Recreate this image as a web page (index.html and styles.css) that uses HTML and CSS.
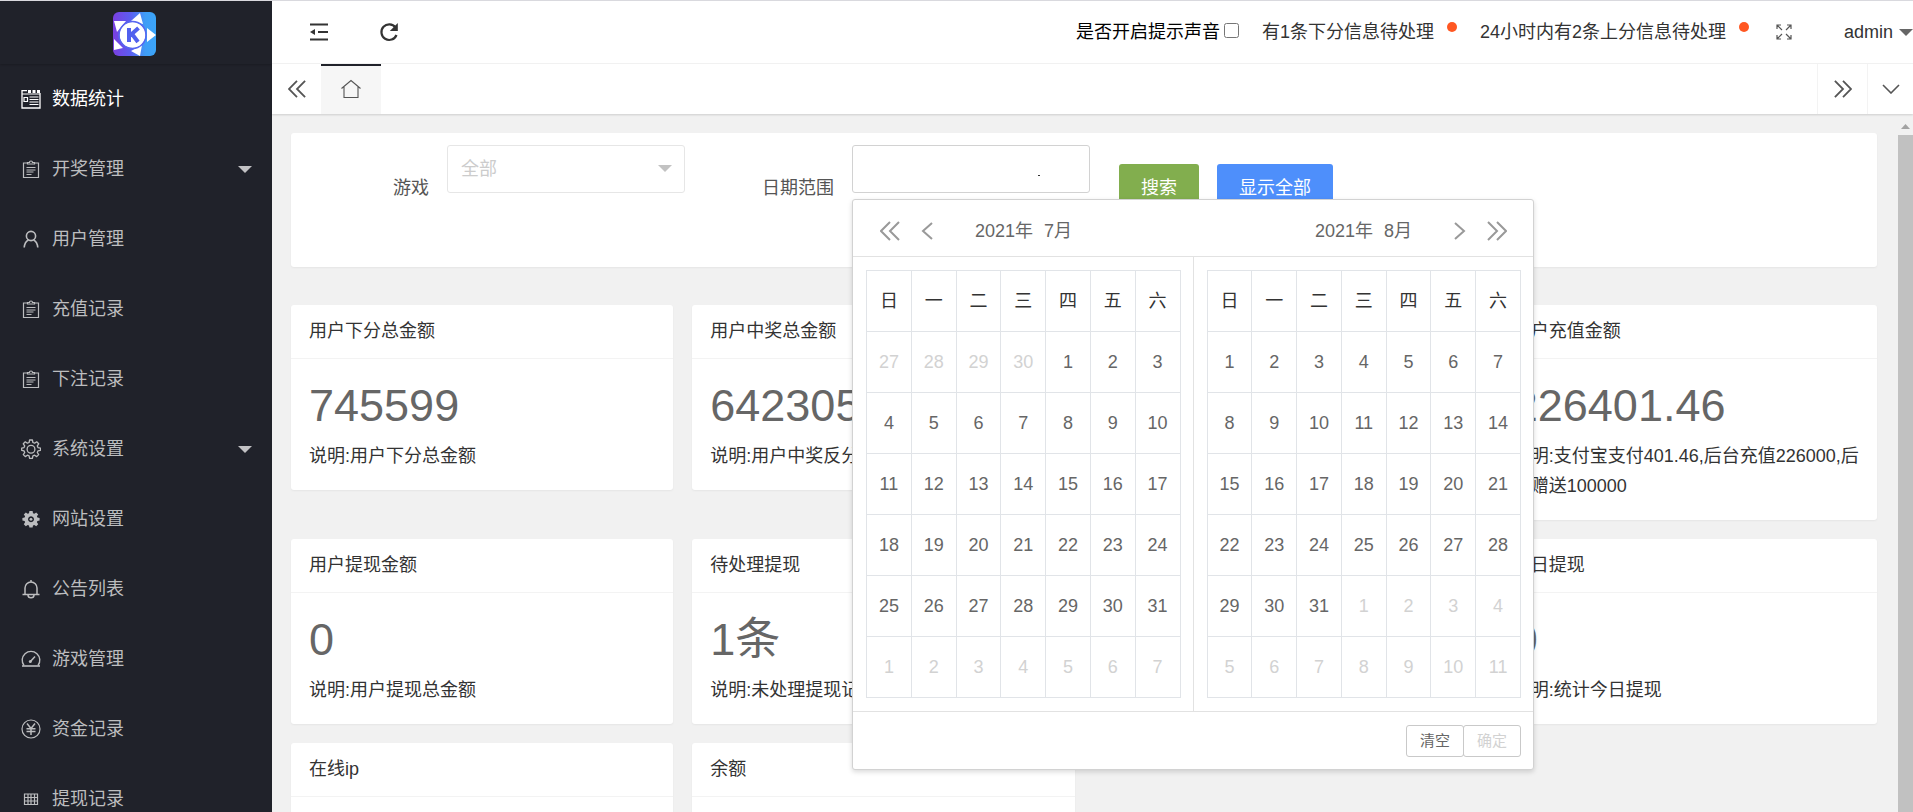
FILE: index.html
```html
<!DOCTYPE html>
<html lang="zh-CN">
<head>
<meta charset="utf-8">
<title>数据统计</title>
<link rel="stylesheet" href="styles.css">
</head>
<body>
<svg class="sprite" aria-hidden="true">
  <symbol id="i-board" viewBox="0 0 20 20"><path d="M1 1v18h18V4" fill="none" stroke="currentColor" stroke-width="1.3"/><path d="M1 1.600h5M1 5h18" stroke="currentColor" stroke-width="1.200"/><path d="M7 1h3v3H7zM11.500 1h3v3h-3zM16 1h3v3h-3z" fill="currentColor"/><path d="M3 8.500h3.500v4H3zM8.500 8h9M8.500 10.500h9M8.500 13h9M8.500 15.500h9" fill="none" stroke="currentColor" stroke-width="1.200"/></symbol>
  <symbol id="i-clip" viewBox="0 0 20 20"><path d="M7 4H2.500v14.500h15V4H13" fill="none" stroke="currentColor" stroke-width="1.200"/><path d="M6.500 5V3.500h2a1.500 1.500 0 0 1 3 0h2V5z" fill="none" stroke="currentColor" stroke-width="1.200"/><path d="M5.500 8.500h9M5.500 11h9M5.500 13h7M5.500 15.500h5" stroke="currentColor" stroke-width="1"/></symbol>
  <symbol id="i-user" viewBox="0 0 20 20"><circle cx="10" cy="7" r="4.600" fill="none" stroke="currentColor" stroke-width="1.600"/><path d="M7.500 11c-2.500 1.200-4 4-4.300 7.500M12.500 11c2.500 1.200 4 4 4.300 7.500" fill="none" stroke="currentColor" stroke-width="1.600"/></symbol>
  <symbol id="i-gear" viewBox="0 0 20 20"><path d="M8.600 1h2.800l.5 2.500 1.700.7 2.100-1.400 2 2-1.400 2.100.7 1.700 2.500.5v2.200l-2.500.5-.7 1.700 1.400 2.100-2 2-2.100-1.400-1.700.7-.5 2.500H8.600l-.5-2.500-1.700-.7-2.100 1.400-2-2 1.400-2.100-.7-1.700L.7 11.300V9.100L3 8.600l.7-1.700-1.400-2.100 2-2 2.100 1.400 1.700-.7z" fill="none" stroke="currentColor" stroke-width="1.300" stroke-linejoin="round"/><circle cx="10" cy="10.200" r="3.900" fill="none" stroke="currentColor" stroke-width="1.300"/></symbol>
  <symbol id="i-gearfill" viewBox="0 0 20 20"><path fill-rule="evenodd" d="M8.400 2h3.200l.4 2.200 1.300.5 1.900-1.300 2 2-1.300 1.900.5 1.300 2.200.4v2.600l-2.200.4-.5 1.300 1.300 1.900-2 2-1.900-1.300-1.300.5-.4 2.200H8.400L8 16.400l-1.300-.5-1.900 1.300-2-2 1.300-1.900-.5-1.300-2.200-.4V9l2.200-.4.5-1.300-1.300-1.900 2-2 1.900 1.300L8 4.200zM10 7.300a3 3 0 1 0 .01 0z" fill="currentColor"/><circle cx="10" cy="10.300" r="1.400" fill="currentColor"/></symbol>
  <symbol id="i-bell" viewBox="0 0 20 20"><path d="M4 15V9a6 6 0 0 1 12 0v6M1.500 15.500h17M10 1v2" fill="none" stroke="currentColor" stroke-width="1.500"/><path d="M7 16a3 2.800 0 0 0 6 0" fill="none" stroke="currentColor" stroke-width="1.500"/></symbol>
  <symbol id="i-dash" viewBox="0 0 20 20"><path d="M3 16.500a8.800 8.800 0 1 1 14 0" fill="none" stroke="currentColor" stroke-width="1.400"/><path d="M1 16h18v2H1z" fill="currentColor" opacity=".8"/><path d="M9 13l5-5.500" stroke="currentColor" stroke-width="1.500"/><circle cx="9.300" cy="12.600" r="1.500" fill="currentColor"/></symbol>
  <symbol id="i-yen" viewBox="0 0 20 20"><circle cx="10" cy="10" r="9" fill="none" stroke="currentColor" stroke-width="1.200"/><path d="M6 4.500l4 5 4-5M10 9.500V16M5.500 9.800h9M5.500 12.600h9" fill="none" stroke="currentColor" stroke-width="1.500"/></symbol>
  <symbol id="i-table" viewBox="0 0 20 20"><path d="M3.500 5h13v10.500h-13zM3 8.500h14M3 12h14M7 5v11M10 5v11M13.500 5v11" fill="none" stroke="currentColor" stroke-width="1.200"/></symbol>
  <symbol id="i-dl" viewBox="0 0 20 20"><path d="M10 1L1 10l9 9M19 1l-9 9 9 9" fill="none" stroke="currentColor" stroke-width="2"/></symbol>
  <symbol id="i-dr" viewBox="0 0 20 20"><path d="M1 1l9 9-9 9M10 1l9 9-9 9" fill="none" stroke="currentColor" stroke-width="2"/></symbol>
  <symbol id="i-l" viewBox="0 0 12 20"><path d="M11 2l-9 8 9 8" fill="none" stroke="currentColor" stroke-width="2"/></symbol>
  <symbol id="i-r" viewBox="0 0 12 20"><path d="M1 2l9 8-9 8" fill="none" stroke="currentColor" stroke-width="2"/></symbol>
  <symbol id="i-tri" viewBox="0 0 14 7"><path d="M0 0h14L7 7z" fill="currentColor"/></symbol>
</svg>

<div class="app">
  <aside class="side">
    <div class="logo">
      <svg width="43" height="44" viewBox="0 0 43 44" role="img" aria-label="K">
        <defs><linearGradient id="lg" x1="0" x2="1"><stop offset="0" stop-color="#7a3fe0"/><stop offset=".4" stop-color="#5c5df0"/><stop offset=".75" stop-color="#3f9df6"/><stop offset="1" stop-color="#3aa5f8"/></linearGradient></defs>
        <rect width="43" height="44" rx="6" fill="url(#lg)"/>
        <g fill="#fff"><circle cx="19.500" cy="23" r="13"/><path d="M27 1l3 11-12-3zM43 23l-9 7V16zM27 44l-9-5 11-6zM1 38V27l9 9zM1 9l12 0-9 11z"/></g>
        <circle cx="19.500" cy="23" r="13.500" fill="none" stroke="#5866f0" stroke-width="1.500"/>
        <path d="M16 16v14M25.500 16l-9 8M19 22l6 8" fill="none" stroke="#5160ee" stroke-width="4"/>
      </svg>
    </div>
    <nav class="menu">
      <a class="item on" href="#"><svg class="ic"><use href="#i-board"/></svg><span>数据统计</span></a>
      <a class="item" href="#"><svg class="ic"><use href="#i-clip"/></svg><span>开奖管理</span><svg class="tri"><use href="#i-tri"/></svg></a>
      <a class="item" href="#"><svg class="ic"><use href="#i-user"/></svg><span>用户管理</span></a>
      <a class="item" href="#"><svg class="ic"><use href="#i-clip"/></svg><span>充值记录</span></a>
      <a class="item" href="#"><svg class="ic"><use href="#i-clip"/></svg><span>下注记录</span></a>
      <a class="item" href="#"><svg class="ic"><use href="#i-gear"/></svg><span>系统设置</span><svg class="tri"><use href="#i-tri"/></svg></a>
      <a class="item" href="#"><svg class="ic"><use href="#i-gearfill"/></svg><span>网站设置</span></a>
      <a class="item" href="#"><svg class="ic"><use href="#i-bell"/></svg><span>公告列表</span></a>
      <a class="item" href="#"><svg class="ic"><use href="#i-dash"/></svg><span>游戏管理</span></a>
      <a class="item" href="#"><svg class="ic"><use href="#i-yen"/></svg><span>资金记录</span></a>
      <a class="item" href="#"><svg class="ic"><use href="#i-table"/></svg><span>提现记录</span></a>
    </nav>
  </aside>

  <div class="right">
    <header class="top">
      <button class="tool" aria-label="收起菜单"><svg width="20" height="20" viewBox="0 0 20 20"><path d="M1 2.500h18M9 10h10M1 17.500h18" stroke="#333" stroke-width="2.200"/><path d="M1 10l5-3v6z" fill="#333"/></svg></button>
      <button class="tool" aria-label="刷新"><svg width="20" height="20" viewBox="0 0 20 20"><path d="M16.500 5.500A7.800 7.800 0 1 0 17.500 13" fill="none" stroke="#333" stroke-width="2.200"/><path d="M18.800 1v8h-8z" fill="#333"/></svg></button>
      <div class="top-right">
        <label class="sound">是否开启提示声音<input type="checkbox"></label>
        <a class="note" href="#">有1条下分信息待处理<i class="dot"></i></a>
        <a class="note" href="#">24小时内有2条上分信息待处理<i class="dot"></i></a>
        <button class="full" aria-label="全屏"><svg width="16" height="16" viewBox="0 0 16 16"><path d="M1 5V1h4M1 1l5 5M11 1h4v4M15 1l-5 5M1 11v4h4M1 15l5-5M15 11v4h-4M15 15l-5-5" fill="none" stroke="#555" stroke-width="1.200"/></svg></button>
        <a class="admin" href="#">admin<svg class="tri"><use href="#i-tri"/></svg></a>
      </div>
    </header>
    <div class="tabs">
      <button class="tab-btn first" aria-label="向左"><svg width="18" height="18"><use href="#i-dl"/></svg></button>
      <button class="tab-home" aria-label="主页"><svg width="20" height="20" viewBox="0 0 20 20"><path d="M.5 9.500L10 1.500l9.500 8M3 8v10.500h14V8" fill="none" stroke="#555" stroke-width="1.100"/></svg></button>
      <span class="fill"></span>
      <button class="tab-btn" aria-label="向右"><svg width="18" height="18"><use href="#i-dr"/></svg></button>
      <button class="tab-btn last" aria-label="更多"><svg width="18" height="10" viewBox="0 0 18 10"><path d="M1 1l8 8 8-8" fill="none" stroke="currentColor" stroke-width="1.600"/></svg></button>
    </div>

    <div class="body">
      <main class="main">
        <form class="filter card">
          <label class="lab lab-game" for="game">游戏</label>
          <div class="field select">
            <select id="game"><option>全部</option></select>
            <svg class="tri"><use href="#i-tri"/></svg>
          </div>
          <label class="lab lab-date" for="range">日期范围</label>
          <div class="field">
            <input id="range" class="range" type="text">
            <i class="speck"></i>
            <div class="picker">
              <div class="p-head">
                <div class="p-month">
                  <button type="button" aria-label="上一年"><svg width="20" height="20"><use href="#i-dl"/></svg></button>
                  <button type="button" aria-label="上一月"><svg width="12" height="20"><use href="#i-l"/></svg></button>
                  <span class="ym"><span>2021年</span><span>7月</span></span>
                </div>
                <div class="p-month next">
                  <span class="ym"><span>2021年</span><span>8月</span></span>
                  <button type="button" aria-label="下一月"><svg width="12" height="20"><use href="#i-r"/></svg></button>
                  <button type="button" aria-label="下一年"><svg width="20" height="20"><use href="#i-dr"/></svg></button>
                </div>
              </div>
              <div class="p-body">
                <div class="p-cal">
                  <table class="cal">
                    <thead><tr><th>日</th><th>一</th><th>二</th><th>三</th><th>四</th><th>五</th><th>六</th></tr></thead>
                    <tbody>
                      <tr><td class="off">27</td><td class="off">28</td><td class="off">29</td><td class="off">30</td><td>1</td><td>2</td><td>3</td></tr>
                      <tr><td>4</td><td>5</td><td>6</td><td>7</td><td>8</td><td>9</td><td>10</td></tr>
                      <tr><td>11</td><td>12</td><td>13</td><td>14</td><td>15</td><td>16</td><td>17</td></tr>
                      <tr><td>18</td><td>19</td><td>20</td><td>21</td><td>22</td><td>23</td><td>24</td></tr>
                      <tr><td>25</td><td>26</td><td>27</td><td>28</td><td>29</td><td>30</td><td>31</td></tr>
                      <tr><td class="off">1</td><td class="off">2</td><td class="off">3</td><td class="off">4</td><td class="off">5</td><td class="off">6</td><td class="off">7</td></tr>
                    </tbody>
                  </table>
                </div>
                <div class="p-cal">
                  <table class="cal">
                    <thead><tr><th>日</th><th>一</th><th>二</th><th>三</th><th>四</th><th>五</th><th>六</th></tr></thead>
                    <tbody>
                      <tr><td>1</td><td>2</td><td>3</td><td>4</td><td>5</td><td>6</td><td>7</td></tr>
                      <tr><td>8</td><td>9</td><td>10</td><td>11</td><td>12</td><td>13</td><td>14</td></tr>
                      <tr><td>15</td><td>16</td><td>17</td><td>18</td><td>19</td><td>20</td><td>21</td></tr>
                      <tr><td>22</td><td>23</td><td>24</td><td>25</td><td>26</td><td>27</td><td>28</td></tr>
                      <tr><td>29</td><td>30</td><td>31</td><td class="off">1</td><td class="off">2</td><td class="off">3</td><td class="off">4</td></tr>
                      <tr><td class="off">5</td><td class="off">6</td><td class="off">7</td><td class="off">8</td><td class="off">9</td><td class="off">10</td><td class="off">11</td></tr>
                    </tbody>
                  </table>
                </div>
              </div>
              <div class="p-foot">
                <button type="button">清空</button><button type="button" disabled>确定</button>
              </div>
            </div>
          </div>
          <button type="button" class="btn green">搜索</button>
          <button type="button" class="btn blue">显示全部</button>
        </form>

        <div class="stats">
          <section class="card"><h2>用户下分总金额</h2><div class="c-body"><p class="num">745599</p><p class="desc">说明:用户下分总金额</p></div></section>
          <section class="card"><h2>用户中奖总金额</h2><div class="c-body"><p class="num">642305</p><p class="desc">说明:用户中奖反分</p></div></section>
          <section class="card col4"><h2>用户充值金额</h2><div class="c-body"><p class="num">226401.46</p><p class="desc">说明:支付宝支付401.46,后台充值226000,后台赠送100000</p></div></section>
          <section class="card"><h2>用户提现金额</h2><div class="c-body"><p class="num">0</p><p class="desc">说明:用户提现总金额</p></div></section>
          <section class="card"><h2>待处理提现</h2><div class="c-body"><p class="num">1条</p><p class="desc">说明:未处理提现记</p></div></section>
          <section class="card col4"><h2>今日提现</h2><div class="c-body"><p class="num">0</p><p class="desc">说明:统计今日提现</p></div></section>
          <section class="card"><h2>在线ip</h2><div class="c-body"></div></section>
          <section class="card"><h2>余额</h2><div class="c-body"></div></section>
        </div>
      </main>
      <div class="scroll" aria-hidden="true">
        <div class="s-up"><svg width="9" height="5" viewBox="0 0 9 5"><path d="M0 5L4.500 0 9 5z" fill="currentColor"/></svg></div>
        <div class="s-thumb"></div>
      </div>
    </div>
  </div>
</div>
</body>
</html>
```
FILE: styles.css
```css
* { box-sizing: border-box; }
body {
  margin: 0;
  background: #f1f1f1;
  color: #333;
  font: 400 18px/24px "Liberation Sans", "Noto Sans CJK SC", sans-serif;
}
button, input, select { font: inherit; color: inherit; }
button { padding: 0; border: 0; background: none; display: flex; align-items: center; justify-content: center; }
a { color: inherit; text-decoration: none; }
h2, p { margin: 0; font-weight: 400; }
.sprite { display: none; }
.tri { width: 14px; height: 7px; flex: none; }

.app { display: flex; height: 100vh; border-top: 1px solid #d9d9de; overflow: hidden; }

/* sidebar */
.side { flex: none; width: 272px; background: #20222a; color: #bcbdbf; }
.logo { height: 63px; display: flex; align-items: center; justify-content: center; padding: 3px 3px 0 0; box-shadow: 0 1px 2px rgba(0,0,0,.2); }
.menu { display: flex; flex-direction: column; }
.item { display: flex; align-items: center; height: 70px; padding: 0 20px 0 21px; }
.item span { flex: 1; margin-left: 11px; }
.ic { width: 20px; height: 20px; flex: none; }
.on { color: #fff; }
.menu .tri { color: #c2c2c4; }

/* header */
.right { flex: 1; min-width: 0; display: flex; flex-direction: column; }
.top { display: flex; height: 63px; flex: none; background: #fff; border-bottom: 1px solid #f3f3f3; padding-left: 12px; }
.tool { width: 70px; }
.top-right { margin-left: auto; display: flex; align-items: center; }
.sound { color: #000; display: flex; align-items: center; }
.sound input { width: 15px; height: 15px; margin: 0 23px 4px 4px; }
.note { display: flex; align-items: center; }
.dot { width: 10px; height: 10px; border-radius: 50%; background: #ff5722; margin: 0 23px 10px 13px; }
.full { margin: 0 52px 0 4px; }
.admin { display: flex; align-items: center; gap: 6px; }
.admin .tri { color: #666; }

.tabs { display: flex; height: 50px; flex: none; background: #fff; color: #555; box-shadow: 0 1px 2px rgba(0,0,0,.15); position: relative; }
.tab-btn { width: 50px; border-left: 1px solid #f3f3f3; }
.tab-btn.first { width: 49px; border: 0; }
.tab-btn.last { width: 46px; }
.tab-home { width: 60px; background: #f6f6f6; border-top: 2px solid #20222a; padding-bottom: 2px; }
.fill { flex: 1; }

/* content */
.body { flex: 1; min-height: 0; display: flex; }
.main { flex: 1; min-width: 0; padding: 19px 21px 0 19px; overflow: hidden; }
.scroll { width: 15px; flex: none; display: flex; flex-direction: column; }
.s-up { height: 21px; display: flex; align-items: center; justify-content: center; color: #a3a3a3; padding-top: 3px; }
.s-thumb { flex: 1; background: #c1c1c1; }

.card { background: #fff; border-radius: 3px; box-shadow: 0 1px 2px rgba(0,0,0,.05); }
.filter { display: flex; align-items: flex-start; padding: 12px 0 55px; }
.lab { color: #555; text-align: right; padding: 31px 18px 0 0; }
.lab-game { width: 156px; }
.lab-date { width: 167px; }
.field { position: relative; width: 238px; }
.field select, .range { display: block; width: 100%; height: 48px; border: 1px solid #e6e6e6; border-radius: 3px; background: #fff; appearance: none; padding: 0 13px; outline: 0; }
.field select { color: #ccc; }
.field .range { border-color: #d2d2d2; }
.select .tri { position: absolute; right: 13px; top: 20px; color: #c2c2c2; pointer-events: none; }
.speck { position: absolute; left: 186px; top: 30px; width: 2px; height: 1px; background: #333; }
.btn { height: 48px; margin-top: 19px; border-radius: 3px; color: #fff; padding: 0 22px; }
.green { background: #82ae4e; margin-left: 29px; }
.blue { background: #4e8ffb; margin-left: 18px; }

.stats { display: grid; grid-template-columns: repeat(4, 1fr); gap: 19px; align-items: start; margin-top: 38px; }
.col4 { grid-column: 4; }
.card h2 { font-size: 18px; line-height: 53px; padding: 0 18px; border-bottom: 1px solid #f3f3f3; }
.c-body { min-height: 131px; padding: 19px 15px 19px 18px; }
.num { font-size: 45px; line-height: 56px; margin-bottom: 7px; color: #666; }
.desc { line-height: 30px; }

/* date range panel */
.picker { position: absolute; z-index: 5; left: 0; top: 54px; width: 682px; background: #fff; border: 1px solid #d2d2d2; border-radius: 3px; box-shadow: 0 2px 5px rgba(0,0,0,.15); color: #666; }
.p-head { display: flex; height: 57px; border-bottom: 1px solid #e2e2e2; padding: 5px 26px 0 27px; }
.p-month { flex: 1; display: flex; align-items: center; }
.p-month button { color: #999; }
.p-month button + button { margin-left: 21px; }
.next { justify-content: flex-end; }
.ym { display: flex; gap: 11px; margin: 0 42px; }
.p-body { display: flex; }
.p-cal { flex: 1; padding: 13px 12px 13px 13px; }
.p-cal + .p-cal { border-left: 1px solid #e2e2e2; }
.cal { width: 100%; border-collapse: collapse; table-layout: fixed; }
.cal th, .cal td { height: 61px; border: 1px solid #e1e4e8; padding: 0; text-align: center; font-weight: 400; }
.cal th { color: #333; }
.cal .off { color: #d2d2d2; }
.p-foot { display: flex; justify-content: flex-end; border-top: 1px solid #e2e2e2; padding: 13px 12px 12px; font-size: 15px; }
.p-foot button { height: 32px; width: 58px; border: 1px solid #c9c9c9; border-radius: 3px; }
.p-foot button + button { margin-left: -1px; }
.p-foot button:disabled { color: #d2d2d2; }
```
